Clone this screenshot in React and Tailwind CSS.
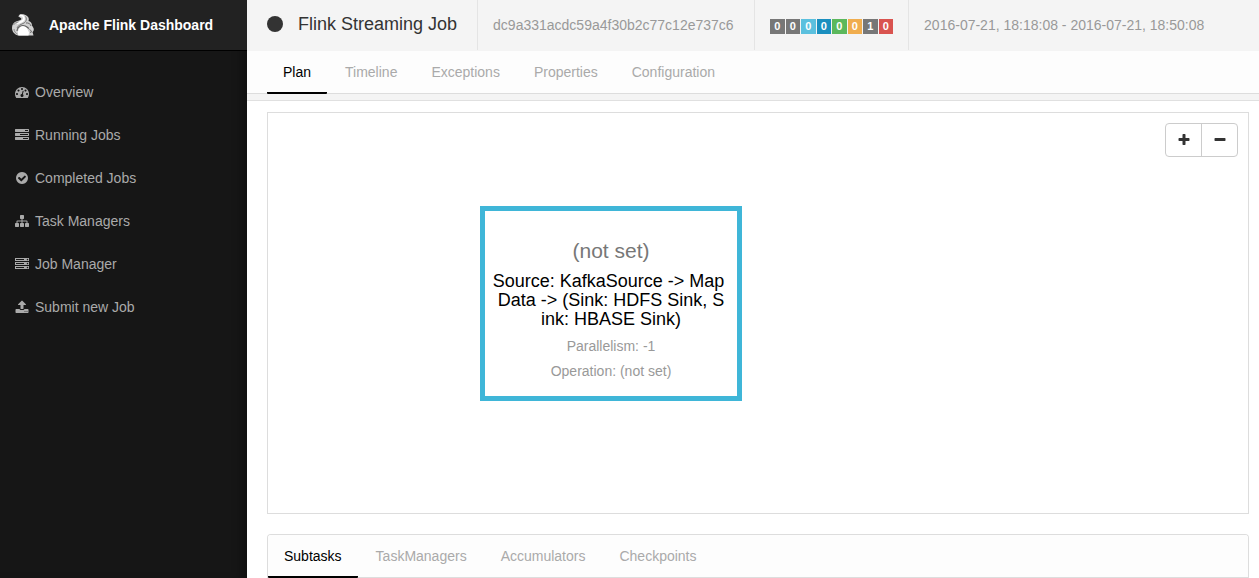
const DOT = 'q0-53-37.5-90.5t-90.5-37.5-90.5 37.5-37.5 90.5 37.5 90.5 90.5 37.5 90.5-37.5 37.5-90.5z';
const LED = 'q0-40-28-68t-68-28-68 28-28 68 28 68 68 28 68-28 28-68z';
const BAR = 'v256q0 26-19 45t-45 19h-1664q-26 0-45-19t-19-45v-256q0-26 19-45t45-19h1664q26 0 45 19t19 45z';

const ICONS = {
  dashboard: `M384 1152${DOT}M576 704${DOT}M1004 1185l101-382q6-26-7.500-48.500t-38.500-29.500-48 6.500-30 39.500l-101 382q-60 5-107 43.500t-63 98.500q-20 77 20 146t117 89 146-20 89-117q16-60-6-117t-72-91zM1664 1152${DOT}M1024 512${DOT}M1472 704${DOT}M1792 1152q0 261-141 483-19 29-54 29h-1402q-35 0-54-29-141-221-141-483 0-182 71-348t191-286 286-191 348-71 348 71 286 191 191 286 71 348z`,
  tasks: `M1024 1408h640v-128h-640v128zM640 896h1024v-128h-1024v128zM1280 384h384v-128h-384v128zM1792 1216${BAR}M1792 704${BAR}M1792 192${BAR}`,
  check:
    'M1412 734q0-28-18-46l-91-90q-19-19-45-19t-45 19l-408 407-226-226q-19-19-45-19t-45 19l-91 90q-18 18-18 46 0 27 18 45l362 362q19 19 45 19 27 0 46-19l543-543q18-18 18-45zM1664 896q0 209-103 385.500t-279.500 279.500-385.500 103-385.500-103-279.500-279.500-103-385.500 103-385.500 279.500-279.500 385.500-103 385.500 103 279.500 279.500 103 385.500z',
  sitemap:
    'M1792 1248v320q0 40-28 68t-68 28h-320q-40 0-68-28t-28-68v-320q0-40 28-68t68-28h96v-192h-512v192h96q40 0 68 28t28 68v320q0 40-28 68t-68 28h-320q-40 0-68-28t-28-68v-320q0-40 28-68t68-28h96v-192h-512v192h96q40 0 68 28t28 68v320q0 40-28 68t-68 28h-320q-40 0-68-28t-28-68v-320q0-40 28-68t68-28h96v-192q0-52 38-90t90-38h512v-192h-96q-40 0-68-28t-28-68v-320q0-40 28-68t68-28h320q40 0 68 28t28 68v320q0 40-28 68t-68 28h-96v192h512q52 0 90 38t38 90v192h96q40 0 68 28t28 68z',
  server: `M128 1408h1024v-128h-1024v128zM128 896h1024v-128h-1024v128zM1696 1344${LED}M128 384h1024v-128h-1024v128zM1696 832${LED}M1696 320${LED}M1792 1152v384h-1792v-384h1792zM1792 640v384h-1792v-384h1792zM1792 128v384h-1792v-384h1792z`,
  upload:
    'M1344 1472q0-26-19-45t-45-19-45 19-19 45 19 45 45 19 45-19 19-45zM1600 1472q0-26-19-45t-45-19-45 19-19 45 19 45 45 19 45-19 19-45zM1728 1248v320q0 40-28 68t-68 28h-1472q-40 0-68-28t-28-68v-320q0-40 28-68t68-28h427q21 56 70.500 92t110.500 36h256q61 0 110.500-36t70.500-92h427q40 0 68 28t28 68zM1403 600q-17 40-59 40h-256v448q0 26-19 45t-45 19h-256q-26 0-45-19t-19-45v-448h-256q-42 0-59-40-17-39 14-69l448-448q18-19 45-19t45 19l448 448q31 30 14 69z',
  plus: 'M1600 736v192q0 40-28 68t-68 28h-416v416q0 40-28 68t-68 28h-192q-40 0-68-28t-28-68v-416h-416q-40 0-68-28t-28-68v-192q0-40 28-68t68-28h416v-416q0-40 28-68t68-28h192q40 0 68 28t28 68v416h416q40 0 68 28t28 68z',
  minus: 'M1600 736v192q0 40-28 68t-68 28h-1216q-40 0-68-28t-28-68v-192q0-40 28-68t68-28h1216q40 0 68 28t28 68z',
};

function Icon({ name }) {
  return (
    <svg viewBox="0 0 1792 1792" className="size-[14px] shrink-0" fill="currentColor" aria-hidden="true">
      <path d={ICONS[name]} />
    </svg>
  );
}

function Logo() {
  return (
    <svg viewBox="0 0 22 22" className="size-[22px] shrink-0" aria-hidden="true">
      <path d="M7 1C9-.5 13 0 15 2c2 1.500 2 3 1.500 5 2 .5 3.500 2 3.500 4.500l1.500 2.500c.8 2-.2 3.500-1 4l1 3.500H6C2.500 20.500 0 17.500 0 14c0-3 1.500-5.500 4-6.500C6 6.700 8.500 6.500 9.500 5 8.500 3.500 7.500 3 6.500 3z" fill="#d2d2d2" />
      <path d="M8 1.500c2.500-.5 4 1 4 3.500C11.500 8 7 8 5 9.500" fill="none" stroke="#fff" strokeWidth="1.800" />
      <path d="M13.500 2.500c1.500 2 1 5-1.500 6.500S6 11 5 14" fill="none" stroke="#777" strokeWidth="1" />
      <path d="M1.500 11c1-2 3-2.500 5-3M2 15c0 2.500 2 4.500 3.500 5" fill="none" stroke="#8a8a8a" strokeWidth="1" />
      <path d="M9 12.500c2-1.500 5-1 6 1.500l2 4.500-.5 3H6.500c-1.500-3 0-7 2.500-9z" fill="#fff" />
      <path d="M5 17c0-3 3-5.500 6-5.500 3.500 0 4 2 6 3" fill="none" stroke="#5c5c5c" strokeWidth="1.100" />
      <path d="M14 9c2.500-.5 4.500 1 5 3M17.500 15.500l2 1.500-1 2" fill="none" stroke="#686868" strokeWidth="1" />
    </svg>
  );
}

const NAV = [
  ['dashboard', 'Overview'],
  ['tasks', 'Running Jobs'],
  ['check', 'Completed Jobs'],
  ['sitemap', 'Task Managers'],
  ['server', 'Job Manager'],
  ['upload', 'Submit new Job'],
];

const COUNTS = [
  ['bg-[#777777]', 0],
  ['bg-[#777777]', 0],
  ['bg-[#5bc0de]', 0],
  ['bg-[#1a8fbf]', 0],
  ['bg-[#5cb85c]', 0],
  ['bg-[#f0ad4e]', 0],
  ['bg-[#777777]', 1],
  ['bg-[#d9534f]', 0],
];

function Tabs({ label, items }) {
  return (
    <nav aria-label={label} className="flex gap-[2px] border-b border-[#dddddd] bg-[#fdfdfd]">
      {items.map((item, i) => (
        <a
          key={item}
          href="#"
          aria-current={i === 0 ? 'page' : undefined}
          className={
            '-mb-px border-b-2 px-4 pt-[11px] pb-[10px] leading-5 ' +
            (i === 0 ? 'rounded-b-[1px] border-black text-black' : 'border-transparent text-[#aaaaaa]')
          }
        >
          {item}
        </a>
      ))}
    </nav>
  );
}

export default function App() {
  return (
    <div className="flex min-h-screen bg-white font-['Liberation_Sans',Arial,sans-serif] text-[14px] leading-5 text-[#333333]">
      <aside className="w-[247px] shrink-0 bg-[#161616] shadow-[inset_-10px_0_10px_-4px_rgba(0,0,0,0.25)]">
        <a href="#" className="flex h-[51px] items-center gap-[15px] border-b border-black bg-[#222222] pl-3 font-bold text-white">
          <Logo />
          Apache Flink Dashboard
        </a>
        <nav aria-label="Main" className="flex flex-col pt-[19px]">
          {NAV.map(([icon, label]) => (
            <a key={label} href="#" className="flex h-[43px] items-center gap-[6px] px-[15px] text-[#aaaaaa]">
              <Icon name={icon} />
              {label}
            </a>
          ))}
        </nav>
      </aside>

      <main className="min-w-0 flex-1">
        <header className="flex h-[51px] bg-[#f4f4f4] pb-px pl-5 text-[#999999]">
          <div className="flex items-center gap-[15px] border-r border-[#e4e4e4] pr-5 pb-[3px]">
            <span className="size-4 rounded-full bg-[#333333]" />
            <h1 className="text-[18px] text-[#333333]">Flink Streaming Job</h1>
          </div>
          <div className="flex w-[277px] items-center border-r border-[#e4e4e4] px-[15px]">dc9a331acdc59a4f30b2c77c12e737c6</div>
          <div className="flex items-center border-r border-[#e4e4e4] px-[15px]">
            <div className="grid w-[123px] grid-cols-8 gap-px pt-[2px] text-center text-[11px] leading-[15px] font-bold text-white">
              {COUNTS.map(([color, count], i) => (
                <span key={i} className={color}>
                  {count}
                </span>
              ))}
            </div>
          </div>
          <div className="flex items-center px-[15px]">2016-07-21, 18:18:08 - 2016-07-21, 18:50:08</div>
        </header>

        <div className="border-b border-[#dddddd] bg-[#fdfdfd] pl-5">
          <div className="-mb-px">
            <Tabs label="Job" items={['Plan', 'Timeline', 'Exceptions', 'Properties', 'Configuration']} />
          </div>
        </div>
        <div className="h-[7px] border-b border-[#e0e0e0] bg-[#f4f4f4]" />

        <div className="flex flex-col gap-5 pt-[11px] pr-[10px] pl-5">
          <section aria-label="Plan" className="relative h-[402px] border border-[#dddddd] bg-white">
            <div className="absolute top-[10px] right-[10px] flex rounded border border-[#cccccc] bg-white">
              <button type="button" aria-label="Zoom in" className="flex h-8 w-9 items-center justify-center border-r border-[#cccccc]">
                <Icon name="plus" />
              </button>
              <button type="button" aria-label="Zoom out" className="flex h-8 w-[35px] items-center justify-center">
                <Icon name="minus" />
              </button>
            </div>
            <div className="absolute top-[93px] left-[212px] h-[195px] w-[262px] border-[5px] border-[#3fb6d8] bg-white pt-7 text-center text-[#999999]">
              <h2 className="text-[21px] leading-6 text-[#777777]">(not set)</h2>
              <p className="mt-[9px] text-[18px] leading-[19px] whitespace-pre text-black">
                {'Source: KafkaSource -> Map '}
                <br />
                {'Data -> (Sink: HDFS Sink, S'}
                <br />
                {'ink: HBASE Sink)'}
              </p>
              <p className="mt-[7px]">Parallelism: -1</p>
              <p className="mt-[5px]">Operation: (not set)</p>
            </div>
          </section>

          <section aria-label="Details" className="overflow-hidden rounded-t border border-b-0 border-[#dddddd]">
            <Tabs label="Details" items={['Subtasks', 'TaskManagers', 'Accumulators', 'Checkpoints']} />
          </section>
        </div>
      </main>
    </div>
  );
}
